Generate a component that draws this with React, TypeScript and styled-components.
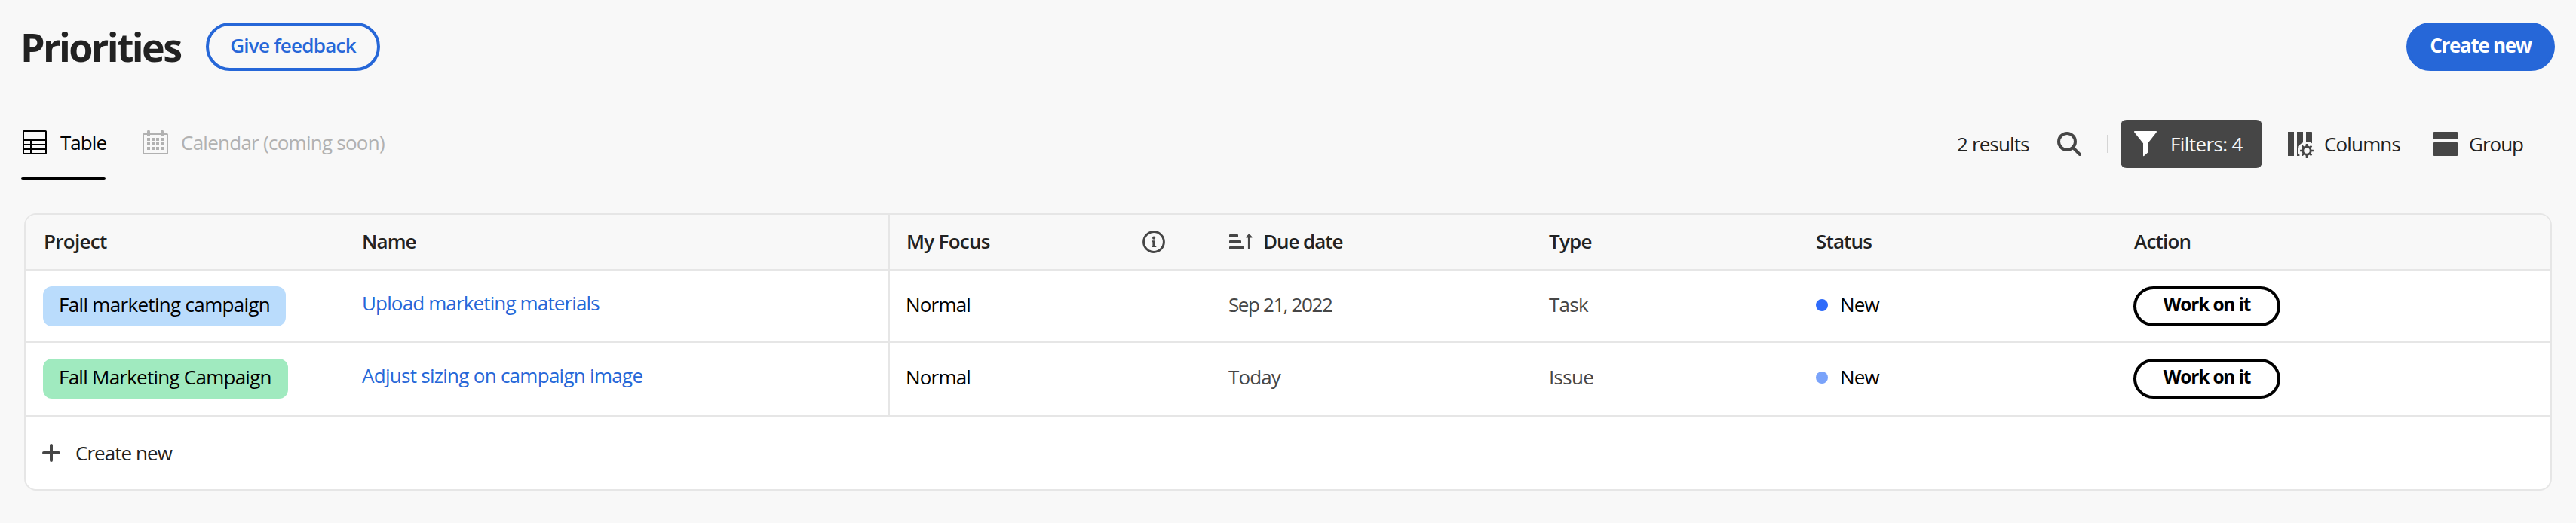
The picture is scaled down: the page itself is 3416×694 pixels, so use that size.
import React from "react";
import styled, { createGlobalStyle } from "styled-components";

const GlobalStyle = createGlobalStyle`
  *, *::before, *::after { box-sizing: border-box; }
  body {
    margin: 0;
    background: #f8f8f8;
    font-family: "Open Sans", "Noto Sans", sans-serif;
    font-size: 26px;
    line-height: 36px;
    color: #222222;
  }
  button { font: inherit; cursor: pointer; margin: 0; }
`;

const Page = styled.main`
  height: 694px;
  padding: 30px 28px 0 26px;
  display: flex;
  flex-direction: column;
  overflow: hidden;
`;

/* ls: tracking in px; lift: how far the text sits above the optical centre */
const Label = styled.span<{ $ls?: number; $lift?: number; $size?: number; $weight?: number; $color?: string; $inset?: number }>`
  display: block;
  white-space: nowrap;
  padding: 0 0 ${(p) => (p.$lift ?? 0) * 2}px ${(p) => p.$inset ?? 0}px;
  letter-spacing: ${(p) => p.$ls ?? -0.65}px;
  font-size: ${(p) => p.$size ?? 26}px;
  font-weight: ${(p) => p.$weight ?? 400};
  color: ${(p) => p.$color ?? "inherit"};
`;

const Header = styled.header`
  display: flex;
  align-items: center;
  height: 64px;
`;

const Title = styled.h1`
  margin: 0;
  width: 247px;
  padding-left: 1px;
  font-size: 52px;
  line-height: 64px;
  font-weight: 700;
  letter-spacing: -2.65px;
  color: #222222;
  white-space: nowrap;
`;

const PillButton = styled.button<{ $filled?: boolean; $width: number }>`
  display: flex;
  align-items: center;
  justify-content: center;
  width: ${(p) => p.$width}px;
  height: 64px;
  padding: 0;
  border: 4px solid #2667d8;
  border-radius: 32px;
  background: ${(p) => (p.$filled ? "#2667d8" : "transparent")};
  color: ${(p) => (p.$filled ? "#ffffff" : "#2667d8")};
  margin-left: ${(p) => (p.$filled ? "auto" : "0")};
`;

const Toolbar = styled.div`
  display: flex;
  align-items: center;
  height: 64px;
  margin-top: 65px;
  padding-left: 2px;
`;

const Tabs = styled.nav`
  display: flex;
  align-self: stretch;
  gap: 49px;
`;

const Tab = styled.div<{ $active?: boolean; $gap: number; $inset: number; $width: number }>`
  position: relative;
  display: flex;
  align-items: center;
  gap: ${(p) => p.$gap}px;
  width: ${(p) => p.$width}px;
  height: 60px;
  padding-left: ${(p) => p.$inset}px;
  color: ${(p) => (p.$active ? "#000000" : "#b1b1b1")};
  svg { flex: none; }
  &::after {
    content: ${(p) => (p.$active ? '""' : "none")};
    position: absolute;
    left: 0;
    right: 0;
    top: 76px;
    height: 4px;
    border-radius: 2px;
    background: #000000;
  }
`;

const Actions = styled.div`
  display: flex;
  align-items: center;
  margin-left: auto;
  padding-right: 40px;
`;

const ResultCount = styled.div`
  width: 133px;
`;

const SearchButton = styled.div`
  display: flex;
`;

const Divider = styled.div`
  width: 2px;
  height: 24px;
  margin: 0 16px 0 34px;
  background: #d5d5d5;
`;

const FilterButton = styled.button`
  display: flex;
  align-items: center;
  width: 188px;
  height: 64px;
  padding: 0 0 0 18px;
  gap: 18px;
  border: 0;
  border-radius: 8px;
  background: #464646;
  color: #f8f8f8;
`;

const ToolItem = styled.div<{ $width: number; $gap: number }>`
  display: flex;
  align-items: center;
  gap: ${(p) => p.$gap}px;
  width: ${(p) => p.$width}px;
  svg { flex: none; }
`;

const ToolItems = styled.div`
  display: flex;
  margin-left: 34px;
`;

const Table = styled.section`
  width: 3352px;
  margin: 60px 0 0 6px;
  border: 2px solid #e6e6e6;
  border-radius: 16px;
  background: #ffffff;
  overflow: hidden;
`;

const Row = styled.div<{ $height: number; $head?: boolean }>`
  display: grid;
  grid-template-columns: 422px 724px 426px 425px 354px 421px 1fr;
  height: ${(p) => p.$height}px;
  border-bottom: 2px solid #e6e6e6;
  background: ${(p) => (p.$head ? "#f8f8f8" : "#ffffff")};
`;

const Cell = styled.div<{ $ruled?: boolean; $head?: boolean; $inset?: number }>`
  display: flex;
  align-items: ${(p) => (p.$head ? "center" : "flex-start")};
  padding: ${(p) => (p.$head ? 0 : 21)}px 0 0 ${(p) => p.$inset ?? 23}px;
  border-right: ${(p) => (p.$ruled ? "2px solid #e6e6e6" : "0")};
`;

const CellContent = styled.div`
  display: flex;
  align-items: center;
  height: 52.5px;
`;

const InfoSlot = styled.div`
  display: flex;
  margin: 0 60px 0 auto;
`;

const SortSlot = styled.div`
  display: flex;
  margin-right: 13px;
`;

const Tag = styled.div<{ $tone: string; $width: number }>`
  display: flex;
  align-items: center;
  width: ${(p) => p.$width}px;
  height: 52.5px;
  padding-left: 21px;
  border-radius: 12px;
  background: ${(p) => p.$tone};
`;

const Dot = styled.span<{ $tone: string }>`
  width: 16px;
  height: 16px;
  margin: 0 16px 2px 0;
  border-radius: 50%;
  background: ${(p) => p.$tone};
`;

const WorkButton = styled.button`
  display: flex;
  align-items: center;
  justify-content: center;
  width: 195px;
  height: 52.5px;
  padding: 0;
  border: 4px solid #000000;
  border-radius: 27px;
  background: #ffffff;
  color: #000000;
`;

const Footer = styled.div`
  display: flex;
  align-items: center;
  gap: 20px;
  height: 96px;
  padding-left: 22px;
`;

const TableIcon = () => (
  <svg width="32" height="32" viewBox="0 0 32 32" fill="none" stroke="currentColor" strokeWidth="2">
    <rect x="1" y="1" width="30" height="30" rx="0.6" />
    <path d="M1 13h30M1 19h30M1 25h30M11 13v18" />
  </svg>
);

const CalendarIcon = () => (
  <svg width="34" height="32" viewBox="0 0 34 32" fill="currentColor">
    <rect x="1" y="5" width="32" height="26" rx="0.6" fill="none" stroke="currentColor" strokeWidth="2" />
    <rect x="6" y="0" width="4" height="8" rx="1.4" />
    <rect x="24" y="0" width="4" height="8" rx="1.4" />
    {[10, 16, 22].map((y) => [6, 12, 18, 24].map((x) => <rect key={`${x}-${y}`} x={x} y={y} width="4" height="4" />))}
  </svg>
);

const SearchIcon = () => (
  <svg width="32" height="32" viewBox="0 0 32 32" fill="none" stroke="#464646" strokeWidth="4" strokeLinecap="round">
    <circle cx="13" cy="13" r="11" />
    <path d="M21.5 21.5L30 30" />
  </svg>
);

const FunnelIcon = () => (
  <svg width="30" height="34" viewBox="0 0 30 34" fill="#ffffff">
    <path d="M.8 0h28.4c.8 0 1 .8.6 1.4L18.2 16.2v12.2L13.2 33c-.6.4-1.2.1-1.2-.5V16.2L.2 1.4C-.2.8 0 0 .8 0z" />
  </svg>
);

const ColumnsIcon = () => (
  <svg width="35" height="32" viewBox="0 0 35 32" fill="#464646" overflow="visible">
    <path d="M0 0h8v32H0zM12 0h8v32h-8zM24 0h7.2c.5 0 .8.3.8.8V20h-8z" />
    <circle cx="25" cy="25" r="12" fill="#f8f8f8" />
    <path d="M12 20h2.6l-1.3 2.6.7 1.4-.8 1 .6 3.2 1.6 2.2V32H12z" />
    <circle cx="25" cy="25" r="5.2" fill="none" stroke="#464646" strokeWidth="2.9" />
    {[0, 45, 90, 135, 180, 225, 270, 315].map((a) => (
      <rect key={a} x="23.7" y="16" width="2.6" height="4" rx="0.5" transform={`rotate(${a} 25 25)`} />
    ))}
  </svg>
);

const GroupIcon = () => (
  <svg width="32" height="32" viewBox="0 0 32 32" fill="#464646">
    <rect width="32" height="10" rx="0.8" />
    <rect y="14" width="32" height="18" rx="0.8" />
  </svg>
);

const InfoIcon = () => (
  <svg width="31" height="30" viewBox="0 0 31 30" fill="#464646">
    <circle cx="15" cy="15" r="13.4" fill="none" stroke="#464646" strokeWidth="3" />
    <circle cx="15.1" cy="9.7" r="2.1" />
    <path d="M12.4 13.2h4.6v6.8h1.3v2h-6.2v-2h1.3v-4.8h-1z" />
  </svg>
);

const SortIcon = () => (
  <svg width="32" height="22" viewBox="0 0 32 22" fill="#464646">
    <rect x="1" y="1" width="12" height="4" rx="1" />
    <rect x="1" y="9" width="16" height="4" rx="1" />
    <rect x="1" y="17" width="20" height="4" rx="1" />
    <path d="M27.4 0L31.6 4.6c.3.4.1.8-.4.8H29v14.4c0 1.6-3.1 1.6-3.1 0V5.4h-2.3c-.5 0-.7-.4-.4-.8z" />
  </svg>
);

const PlusIcon = () => (
  <svg width="24" height="24" viewBox="0 0 24 24" fill="none" stroke="#464646" strokeWidth="4" strokeLinecap="round">
    <path d="M12 2v20M2 12h20" />
  </svg>
);

const HeadLabel = ({ ls, inset = 0, children }: { ls: number; inset?: number; children: string }) => (
  <Label $weight={650} $lift={1} $ls={ls} $inset={inset}>{children}</Label>
);

const rows = [
  {
    project: "Fall marketing campaign", projectLs: -0.68, tone: "#badcfc", tagWidth: 321.5,
    name: "Upload marketing materials", nameLs: -0.86,
    due: "Sep 21, 2022", dueLs: -1.4, type: "Task", typeLs: -0.7, dot: "#2f6bfa", height: 96,
  },
  {
    project: "Fall Marketing Campaign", projectLs: -0.75, tone: "#a0eabf", tagWidth: 325,
    name: "Adjust sizing on campaign image", nameLs: -0.72,
    due: "Today", dueLs: -0.9, type: "Issue", typeLs: -0.7, dot: "#7aa3fa", height: 98,
  },
];

export default function App() {
  return (
    <Page>
      <GlobalStyle />
      <Header>
        <Title>Priorities</Title>
        <PillButton $width={231}>
          <Label $weight={630} $lift={2} $ls={-0.75}>Give feedback</Label>
        </PillButton>
        <PillButton $filled $width={197}>
          <Label $weight={700} $lift={2} $ls={-1.3}>Create new</Label>
        </PillButton>
      </Header>

      <Toolbar>
        <Tabs>
          <Tab $active $gap={18} $inset={2} $width={112}>
            <TableIcon />
            <Label $ls={-0.95}>Table</Label>
          </Tab>
          <Tab $gap={17} $inset={0} $width={324}>
            <CalendarIcon />
            <Label $ls={-0.74}>Calendar (coming soon)</Label>
          </Tab>
        </Tabs>
        <Actions>
          <ResultCount><Label $ls={-0.85}>2 results</Label></ResultCount>
          <SearchButton><SearchIcon /></SearchButton>
          <Divider />
          <FilterButton>
            <FunnelIcon />
            <Label $ls={-0.6}>Filters: 4</Label>
          </FilterButton>
          <ToolItems>
            <ToolItem $width={193} $gap={13}>
              <ColumnsIcon />
              <Label $ls={-0.85}>Columns</Label>
            </ToolItem>
            <ToolItem $width={121} $gap={15}>
              <GroupIcon />
              <Label $ls={-1}>Group</Label>
            </ToolItem>
          </ToolItems>
        </Actions>
      </Toolbar>

      <Table>
        <Row $head $height={74}>
          <Cell $head><HeadLabel ls={-0.7} inset={1}>Project</HeadLabel></Cell>
          <Cell $head $ruled><HeadLabel ls={-0.9} inset={1}>Name</HeadLabel></Cell>
          <Cell $head $inset={21}>
            <HeadLabel ls={-0.7} inset={1}>My Focus</HeadLabel>
            <InfoSlot><InfoIcon /></InfoSlot>
          </Cell>
          <Cell $head>
            <SortSlot><SortIcon /></SortSlot>
            <HeadLabel ls={-1.05} inset={1}>Due date</HeadLabel>
          </Cell>
          <Cell $head><HeadLabel ls={-0.75}>Type</HeadLabel></Cell>
          <Cell $head><HeadLabel ls={-0.85}>Status</HeadLabel></Cell>
          <Cell $head><HeadLabel ls={-0.8} inset={1}>Action</HeadLabel></Cell>
        </Row>
        {rows.map((r) => (
          <Row key={r.name} $height={r.height}>
            <Cell>
              <Tag $tone={r.tone} $width={r.tagWidth}>
                <Label $lift={2.3} $ls={r.projectLs} $color="#000000">{r.project}</Label>
              </Tag>
            </Cell>
            <Cell $ruled>
              <CellContent><Label $lift={4.3} $ls={r.nameLs} $inset={1} $color="#2667d8">{r.name}</Label></CellContent>
            </Cell>
            <Cell $inset={21}>
              <CellContent><Label $lift={2.3} $ls={-0.8} $color="#000000">Normal</Label></CellContent>
            </Cell>
            <Cell>
              <CellContent><Label $lift={2.3} $ls={r.dueLs} $color="#464646">{r.due}</Label></CellContent>
            </Cell>
            <Cell>
              <CellContent><Label $lift={2.3} $ls={r.typeLs} $color="#464646">{r.type}</Label></CellContent>
            </Cell>
            <Cell>
              <CellContent>
                <Dot $tone={r.dot} />
                <Label $lift={2.3} $ls={-0.9} $color="#000000">New</Label>
              </CellContent>
            </Cell>
            <Cell>
              <WorkButton><Label $weight={700} $size={24.5} $lift={2.3} $ls={-1.2}>Work on it</Label></WorkButton>
            </Cell>
          </Row>
        ))}
        <Footer>
          <PlusIcon />
          <Label $ls={-0.95}>Create new</Label>
        </Footer>
      </Table>
    </Page>
  );
}
